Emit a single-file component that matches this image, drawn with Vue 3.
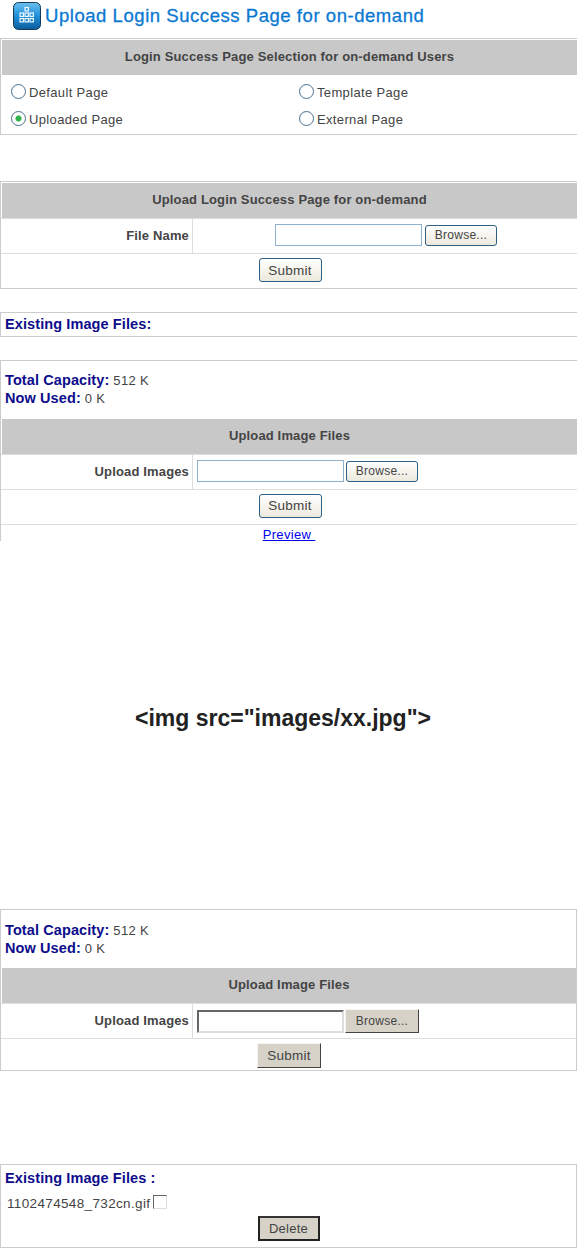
<template>
  <div class="page">
    <h1 class="page-title">
      <svg class="title-icon" width="28" height="28" viewBox="0 0 28 28">
        <defs>
          <linearGradient id="iconBg" x1="0" y1="0" x2="0" y2="1">
            <stop offset="0" stop-color="#6cc0ee" />
            <stop offset="0.5" stop-color="#1f8fd8" />
            <stop offset="1" stop-color="#0b5c9c" />
          </linearGradient>
        </defs>
        <rect x="0.5" y="0.5" width="27" height="27" rx="5" fill="url(#iconBg)" stroke="#123a55" />
        <g fill="none" stroke="#eaf6fd" stroke-width="1.2">
          <rect x="12" y="5.5" width="3.4" height="3.4" />
          <rect x="7" y="11" width="3.4" height="3.4" />
          <rect x="12" y="11" width="3.4" height="3.4" />
          <rect x="17" y="11" width="3.4" height="3.4" />
          <rect x="7" y="16.5" width="3.4" height="3.4" />
          <rect x="12" y="16.5" width="3.4" height="3.4" />
          <rect x="17" y="16.5" width="3.4" height="3.4" />
        </g>
      </svg>
      Upload Login Success Page for on-demand
    </h1>

    <section class="panel panel-select">
      <div class="head">Login Success Page Selection for on-demand Users</div>
      <div class="radios">
        <label v-for="opt in pageOptions" :key="opt.label" class="radio-item">
          <input type="radio" name="page" :checked="opt.checked" />
          {{ opt.label }}
        </label>
      </div>
    </section>

    <section class="panel panel-upload">
      <div class="head">Upload Login Success Page for on-demand</div>
      <div class="row form-row">
        <div class="row-label">File Name</div>
        <div class="row-field field-centered">
          <span class="text-box"></span>
          <button class="btn browse">Browse...</button>
        </div>
      </div>
      <div class="row submit-row"><button class="btn submit">Submit</button></div>
    </section>

    <section class="panel panel-existing">
      <strong class="navy">Existing Image Files:</strong>
    </section>

    <section class="panel panel-images">
      <div class="capacity">
        <div><strong class="navy">Total Capacity:</strong> 512 K</div>
        <div><strong class="navy">Now Used:</strong> 0 K</div>
      </div>
      <div class="head">Upload Image Files</div>
      <div class="row form-row">
        <div class="row-label">Upload Images</div>
        <div class="row-field">
          <span class="text-box"></span>
          <button class="btn browse">Browse...</button>
        </div>
      </div>
      <div class="row submit-row short"><button class="btn submit">Submit</button></div>
      <div class="row preview-row"><a href="#" class="preview">Preview&nbsp;</a></div>
    </section>

    <p class="code-sample">&lt;img src="images/xx.jpg"&gt;</p>

    <section class="panel panel-images classic">
      <div class="capacity">
        <div><strong class="navy">Total Capacity:</strong> 512 K</div>
        <div><strong class="navy">Now Used:</strong> 0 K</div>
      </div>
      <div class="head">Upload Image Files</div>
      <div class="row form-row">
        <div class="row-label">Upload Images</div>
        <div class="row-field">
          <span class="text-box"></span>
          <button class="btn browse">Browse...</button>
        </div>
      </div>
      <div class="row submit-row short"><button class="btn submit">Submit</button></div>
    </section>

    <section class="panel panel-delete classic">
      <strong class="navy delete-title">Existing Image Files :</strong>
      <div class="file-line">1102474548_732cn.gif <input type="checkbox" class="check" /></div>
      <div class="delete-line"><button class="btn delete">Delete</button></div>
    </section>
  </div>
</template>

<script setup>
const pageOptions = [
  { label: 'Default Page', checked: false },
  { label: 'Template Page', checked: false },
  { label: 'Uploaded Page', checked: true },
  { label: 'External Page', checked: false }
];
</script>

<style>
html, body { background: #fff; }
</style>

<style scoped>
.page {
  width: 577px;
  height: 1248px;
  overflow: hidden;
  font-family: "Liberation Sans", Arial, sans-serif;
  font-size: 13px;
  color: #444;
  letter-spacing: 0.35px;
}
.page-title {
  display: flex;
  align-items: center;
  gap: 4px;
  margin: 2px 0 0 13px;
  height: 28px;
  font-size: 18.5px;
  font-weight: 400;
  color: #0a78d2;
  -webkit-text-stroke: 0.3px #0a78d2;
  letter-spacing: 0.55px;
  white-space: nowrap;
}
.title-icon { flex: none; }

.panel {
  box-sizing: border-box;
  border: 1px solid #ccc;
  border-right: none;
}
.head {
  height: 35px;
  margin-top: 1px;
  margin-left: 1px;
  background: #c8c8c8;
  display: flex;
  align-items: center;
  justify-content: center;
  padding-bottom: 2px;
  box-sizing: border-box;
  font-weight: 700;
  color: #444;
  letter-spacing: 0.15px;
}
.navy { color: #0c0c8c; font-size: 14.5px; letter-spacing: 0.1px; line-height: 1; }

.panel-select { margin-top: 8px; height: 97px; }
.radios {
  display: grid;
  grid-template-columns: 288px 1fr;
  grid-auto-rows: 27px;
  padding: 4px 0 0 10px;
}
.radio-item { display: flex; align-items: center; gap: 3px; }
.radio-item input {
  appearance: none;
  box-sizing: border-box;
  width: 15px;
  height: 15px;
  margin: 0 0 2px;
  border: 1px solid #4d6f8e;
  border-radius: 50%;
  background: radial-gradient(circle at 60% 60%, #fff 55%, #dde8f2);
}
.radio-item input:checked {
  background: radial-gradient(circle, #2fb24a 0, #2fb24a 2.5px, #fff 3.5px);
}

.panel-upload { margin-top: 46px; height: 108px; }
.row { border-top: 1px solid #ddd; box-sizing: border-box; }
.form-row { display: flex; height: 35px; }
.row-label {
  box-sizing: border-box;
  width: 192px;
  flex: none;
  padding: 0 3px 2px 0;
  border-right: 1px solid #ddd;
  display: flex;
  align-items: center;
  justify-content: flex-end;
  font-weight: 700;
  letter-spacing: 0.15px;
}
.row-field { display: flex; align-items: center; gap: 2px; padding: 0 0 2px 4px; }
.field-centered { gap: 3px; padding-left: 82px; }
.text-box {
  box-sizing: border-box;
  display: block;
  width: 147px;
  height: 22px;
  border: 1px solid #8fb0cc;
}
.btn {
  box-sizing: border-box;
  padding: 0;
  font: inherit;
  font-size: 12px;
  letter-spacing: 0.25px;
  color: #444;
  background: linear-gradient(#fff, #ece9dc);
  border: 1px solid #2e5f85;
  border-radius: 3px;
}
.browse { width: 72px; height: 21px; }
.submit { width: 63px; height: 24px; font-size: 13.5px; }
.submit-row {
  height: 36px;
  display: flex;
  align-items: center;
  justify-content: center;
  padding: 0 0 3px 2px;
}

.panel-existing {
  margin-top: 23px;
  height: 25px;
  padding-left: 4px;
  display: flex;
  align-items: center;
}

.panel-images { margin-top: 23px; }
.panel-images:not(.classic) { height: 181px; border-bottom: none; }
.capacity { height: 57px; padding: 11px 0 0 4px; box-sizing: border-box; line-height: 18px; }
.panel-images .head { margin-top: 1px; }
.submit-row.short { height: 35px; }
.preview-row { height: 21px; text-align: center; line-height: 19px; }
.preview { color: #0000ee; }

.code-sample {
  margin: 166px 0 0;
  height: 22px;
  text-align: center;
  font-size: 23px;
  font-weight: 700;
  line-height: 22px;
  color: #222;
  letter-spacing: 0;
  padding-right: 11px;
}

.classic { border-right: 1px solid #ccc; }
.panel-images.classic { margin-top: 180px; height: 162px; }
.classic .btn {
  background: #d6d2c8;
  border: 1px solid;
  border-color: #f6f5f0 #444 #444 #f6f5f0;
  border-radius: 0;
}
.classic .text-box { border: 2px solid; border-color: #666 #ddd #ddd #666; height: 23px; }
.classic .row-field { gap: 1px; padding-bottom: 0; }
.classic .browse { width: 74px; height: 24px; }
.classic .submit { width: 64px; height: 25px; }
.classic .submit-row { padding: 0 0 2px 1px; }
.classic .capacity { padding-top: 12px; }

.panel-delete { margin-top: 93px; height: 84px; padding: 4px 0 0 4px; }
.delete-title { display: block; line-height: 18px; }
.file-line {
  display: flex;
  align-items: center;
  gap: 3px;
  padding-left: 2px;
  margin-top: 7px;
  height: 18px;
  font-size: 13.5px;
}
.check {
  appearance: none;
  box-sizing: border-box;
  width: 14px;
  height: 14px;
  margin: 0 0 3px;
  border: 1px solid;
  border-color: #666 #ddd #ddd #666;
}
.delete-line { display: flex; justify-content: center; padding-right: 4px; margin-top: 4px; }
.classic .delete {
  width: 62px;
  height: 25px;
  font-size: 13px;
  border: 2px solid;
  border-color: #222;
  border-top-color: #333;
}
</style>
